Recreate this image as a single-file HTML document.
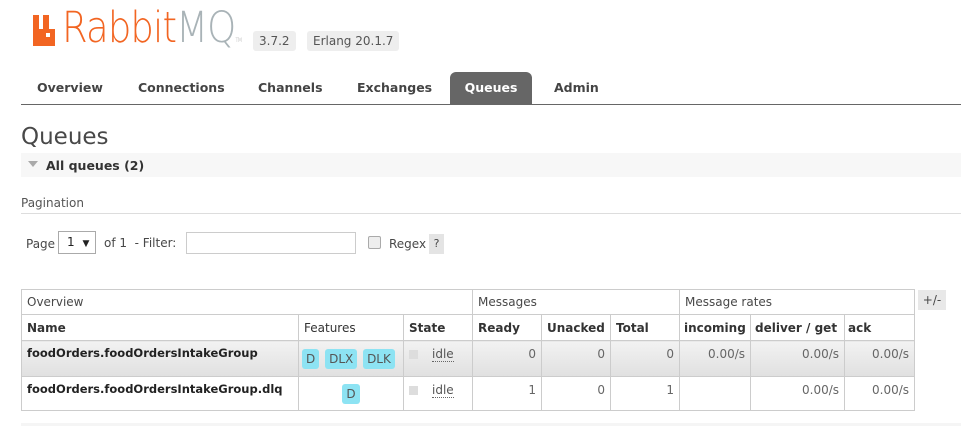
<!DOCTYPE html>
<html><head><style>
body{margin:0;background:#fff;font-family:"DejaVu Sans",Verdana,sans-serif;font-size:12px;color:#484848;width:961px;height:426px;overflow:hidden;position:relative}
.a{position:absolute}
.ver{background:#eee;border-radius:3px;padding:3px 6px;font-size:12px;color:#555}
.tab{position:absolute;top:72px;height:32px;line-height:32px;font-weight:bold;font-size:12.5px;color:#444}
table{border-collapse:collapse;position:absolute;left:21px;top:289px;table-layout:fixed;width:893px}
td,th{border:1px solid #ccc;padding:0 5px;font-size:12px;white-space:nowrap;overflow:hidden;box-sizing:border-box}
th{text-align:left}
.h1 td{height:25px;color:#484848}
.h2 th{height:26px;font-weight:bold;color:#333}
.r1 td{height:36px;background:linear-gradient(#f2f2f2,#e0e0e0);vertical-align:middle}
.r2 td{height:34px}
.n{text-align:right;color:#666;vertical-align:top!important;padding-top:6px}
.b{font-weight:bold;color:#222;vertical-align:top!important;padding-top:5px}
.f{display:inline-block;background:#8de3f3;border-radius:3px;padding:3px 4px;color:#555;margin:0 1px}
.st{color:#555;vertical-align:top!important;padding-top:6px}
.st span{display:inline-block;width:9px;height:9px;background:#ddd;margin-right:14px;vertical-align:-1px}
.st u{text-decoration:none;border-bottom:1px dotted #666}
</style></head><body>
<svg class="a" style="left:33px;top:15px" width="22" height="31" viewBox="0 0 22 31"><path d="M0 0h6v14h4V0h6v14h6v17H0z" fill="#f26522"/><rect x="13" y="18" width="4" height="4" fill="#fff"/></svg>
<div class="a" style="left:62px;top:3px;font-family:'DejaVu Sans',sans-serif;font-size:43px;color:#f26522;font-weight:200;transform:scaleX(0.86);transform-origin:0 0;letter-spacing:-1px">Rabbit<span style="color:#a9b3b7">MQ</span><span style="font-size:6px;color:#aaa">TM</span></div>
<div class="a ver" style="left:253px;top:31px">3.7.2</div>
<div class="a ver" style="left:307px;top:31px">Erlang 20.1.7</div>
<div class="tab" style="left:37px">Overview</div>
<div class="tab" style="left:138px">Connections</div>
<div class="tab" style="left:258px">Channels</div>
<div class="tab" style="left:357px">Exchanges</div>
<div class="tab" style="left:450px;width:82px;text-align:center;background:#666;color:#fff;border-radius:6px 6px 0 0">Queues</div>
<div class="tab" style="left:554px">Admin</div>
<div class="a" style="left:21px;top:104px;width:940px;height:1px;background:#666"></div>
<div class="a" style="left:21px;top:124px;font-size:23px;color:#484848">Queues</div>
<div class="a" style="left:21px;top:153px;width:940px;height:24px;background:#f7f7f7"></div>
<div class="a" style="left:28px;top:161px;width:0;height:0;border-left:5px solid transparent;border-right:5px solid transparent;border-top:6px solid #aaa"></div>
<div class="a" style="left:46px;top:158px;font-weight:bold;font-size:12.5px;color:#333">All queues (2)</div>
<div class="a" style="left:21px;top:196px;color:#555">Pagination</div>
<div class="a" style="left:21px;top:213px;width:940px;height:1px;background:#ddd"></div>
<div class="a" style="left:26px;top:237px">Page</div>
<div class="a" style="left:58px;top:231px;width:38px;height:23px;border:1px solid #aaa;box-sizing:border-box;line-height:21px;padding-left:8px;color:#222">1 <span style="font-size:9px;margin-left:4px">▼</span></div>
<div class="a" style="left:104px;top:236px">of 1 &nbsp;- Filter:</div>
<div class="a" style="left:186px;top:232px;width:170px;height:22px;border:1px solid #ccc;box-sizing:border-box"></div>
<div class="a" style="left:368px;top:236px;width:11px;height:11px;border:1px solid #aaa;background:#eee;border-radius:2px"></div>
<div class="a" style="left:389px;top:237px">Regex</div>
<div class="a" style="left:429px;top:234px;width:15px;height:20px;background:#e4e4e4;text-align:center;line-height:20px;font-size:11px">?</div>
<table>
<colgroup><col style="width:277px"><col style="width:105px"><col style="width:69px"><col style="width:69px"><col style="width:69px"><col style="width:69px"><col style="width:71px"><col style="width:94px"><col style="width:70px"></colgroup>
<tr class="h1"><td colspan="3">Overview</td><td colspan="3">Messages</td><td colspan="3">Message rates</td></tr>
<tr class="h2"><th>Name</th><th style="font-weight:normal">Features</th><th>State</th><th>Ready</th><th>Unacked</th><th>Total</th><th style="padding:0 4px">incoming</th><th style="padding:0 4px">deliver / get</th><th style="padding:0 3px">ack</th></tr>
<tr class="r1"><td class="b" style="font-size:11.5px">foodOrders.foodOrdersIntakeGroup</td><td style="padding:0 2px"><span class="f">D</span> <span class="f">DLX</span> <span class="f">DLK</span></td><td class="st"><span></span><u>idle</u></td><td class="n">0</td><td class="n">0</td><td class="n">0</td><td class="n">0.00/s</td><td class="n">0.00/s</td><td class="n">0.00/s</td></tr>
<tr class="r2"><td class="b" style="font-size:11.5px">foodOrders.foodOrdersIntakeGroup.dlq</td><td style="text-align:center"><span class="f">D</span></td><td class="st"><span></span><u>idle</u></td><td class="n">1</td><td class="n">0</td><td class="n">1</td><td></td><td class="n">0.00/s</td><td class="n">0.00/s</td></tr>
</table>
<div class="a" style="left:918px;top:290px;width:28px;height:20px;background:#e8e8e8;text-align:center;line-height:20px">+/-</div>
<div class="a" style="left:21px;top:423px;width:940px;height:3px;background:#f5f5f5"></div>
</body></html>
